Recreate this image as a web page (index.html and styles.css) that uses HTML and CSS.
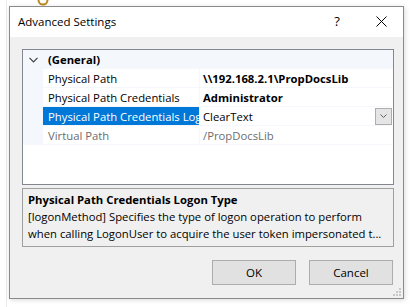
FILE: index.html
```html
<!DOCTYPE html>
<html lang="en">
<head>
  <meta charset="UTF-8">
  <title>Advanced Settings</title>
  <link rel="stylesheet" href="styles.css">
</head>
<body>
  <div class="desk">
    <svg class="ring" width="16" height="10" viewBox="0 0 16 10">
      <circle cx="8" cy="0" r="4.5" fill="none" stroke="#b98a17" stroke-width="2"/>
    </svg>

    <div class="dialog">
      <div class="titlebar">
        <span class="title">Advanced Settings</span>
        <span class="help">?</span>
        <span class="close">
          <svg width="11" height="11" viewBox="0 0 11 11">
            <path d="M0.5 0.5 L10.5 10.5 M10.5 0.5 L0.5 10.5" stroke="#000" stroke-width="1"/>
          </svg>
        </span>
      </div>

      <div class="content">
        <div class="grid">
          <div class="row category">
            <span class="toggle">
              <svg width="9" height="6" viewBox="0 0 9 6">
                <path d="M0.5 0.8 L4.5 4.8 L8.5 0.8" fill="none" stroke="#404040" stroke-width="1.2"/>
              </svg>
            </span>
            <span class="cat-name">(General)</span>
          </div>
          <div class="row">
            <span class="gutter"></span>
            <span class="name">Physical Path</span>
            <span class="value bold">\\192.168.2.1\PropDocsLib</span>
          </div>
          <div class="row">
            <span class="gutter"></span>
            <span class="name">Physical Path Credentials</span>
            <span class="value bold">Administrator</span>
          </div>
          <div class="row selected">
            <span class="gutter"></span>
            <span class="name">Physical Path Credentials Logon Type</span>
            <span class="value">
              <span class="value-text">ClearText</span>
              <span class="drop">
                <svg width="7" height="4" viewBox="0 0 7 4">
                  <path d="M0.5 0.5 L3.5 3.5 L6.5 0.5" fill="none" stroke="#606060" stroke-width="1"/>
                </svg>
              </span>
            </span>
          </div>
          <div class="row readonly">
            <span class="gutter"></span>
            <span class="name">Virtual Path</span>
            <span class="value">/PropDocsLib</span>
          </div>
        </div>

        <div class="desc">
          <div class="desc-title">Physical Path Credentials Logon Type</div>
          <div class="desc-line">[logonMethod] Specifies the type of logon operation to perform</div>
          <div class="desc-line">when calling LogonUser to acquire the user token impersonated t...</div>
        </div>

        <div class="buttons">
          <button>OK</button>
          <button>Cancel</button>
        </div>
      </div>

      <svg class="grip" width="8" height="8" viewBox="0 0 8 8">
        <rect x="6" y="0" width="2" height="2" fill="#c8c8c8"/>
        <rect x="3" y="3" width="2" height="2" fill="#c8c8c8"/>
        <rect x="6" y="3" width="2" height="2" fill="#c8c8c8"/>
        <rect x="0" y="6" width="2" height="2" fill="#c8c8c8"/>
        <rect x="3" y="6" width="2" height="2" fill="#c8c8c8"/>
        <rect x="6" y="6" width="2" height="2" fill="#c8c8c8"/>
      </svg>
    </div>
  </div>
</body>
</html>
```

FILE: styles.css
```css
body {
  margin: 0;
  width: 412px;
  height: 307px;
  overflow: hidden;
  background-color: #fff;
  font-family: 'Open Sans', 'Noto Sans', sans-serif;
  font-size: 11.3px;
  color: #000;
}

.desk {
  position: relative;
  height: 307px;
  box-sizing: border-box;
  margin-left: 6px;
  border-left: 1px solid #ececec;
  padding: 6px 0 0 2px;
}

.ring {
  position: absolute;
  left: 28px;
  top: 0;
}

.dialog {
  position: relative;
  width: 395px;
  height: 293px;
  box-sizing: border-box;
  border: 1px solid #8a8a8a;
  background-color: #f0f0f0;
  display: flex;
  flex-direction: column;
  box-shadow: 1px 1px 5px rgba(0, 0, 0, 0.15);
}

.titlebar {
  height: 30px;
  background-color: #fff;
  display: flex;
  align-items: center;
  padding-left: 8px;
  padding-bottom: 2px;
  box-sizing: border-box;
  font-size: 11.5px;
}

.title {
  flex: 1;
}

.help {
  width: 46px;
  text-align: center;
  font-size: 13px;
}

.close {
  width: 43px;
  display: flex;
  justify-content: center;
}

.content {
  flex: 1;
  padding: 12px 9px 0 12px;
  display: flex;
  flex-direction: column;
}

.grid {
  height: 136px;
  box-sizing: border-box;
  border: 1px solid #828790;
  background-color: #fff;
}

.row {
  display: grid;
  grid-template-columns: 20px 156px 1fr;
  height: 18px;
  border-bottom: 1px solid #f4f7fc;
  line-height: 19px;
}

.row.category {
  background-color: #f4f7fc;
  font-weight: bold;
}

.toggle {
  display: flex;
  align-items: center;
  justify-content: center;
}

.cat-name {
  padding-left: 5px;
}

.gutter {
  background-color: #f4f7fc;
}

.name {
  padding-left: 5px;
  white-space: nowrap;
  overflow: hidden;
}

.value {
  display: flex;
  align-items: center;
  border-left: 1px solid #f4f7fc;
  padding-left: 3px;
  white-space: nowrap;
  overflow: hidden;
}

.value-text {
  flex: 1;
}

.bold {
  font-weight: bold;
}

.selected .name {
  background-color: #0078d7;
  color: #fff;
}

.readonly .name,
.readonly .value {
  color: #6d6d6d;
}

.drop {
  width: 15px;
  height: 15px;
  margin-right: 1px;
  border: 1px solid #adadad;
  background-color: #e5e5e5;
  display: flex;
  align-items: center;
  justify-content: center;
}

.desc {
  margin-top: 3px;
  height: 59px;
  box-sizing: border-box;
  border: 1px solid #a0a0a0;
  padding: 2px 5px;
  line-height: 17px;
}

.desc-title {
  font-weight: bold;
}

.desc-line {
  white-space: nowrap;
  overflow: hidden;
}

.buttons {
  display: flex;
  justify-content: flex-end;
  gap: 13px;
  margin-top: 13px;
  padding-right: 1px;
}

button {
  width: 84px;
  height: 25px;
  border: 1px solid #adadad;
  background-color: #e1e1e1;
  font-family: 'Open Sans', 'Noto Sans', sans-serif;
  font-size: 11.5px;
  color: #000;
  padding: 0;
}

.grip {
  position: absolute;
  right: 2px;
  bottom: 2px;
}
```
